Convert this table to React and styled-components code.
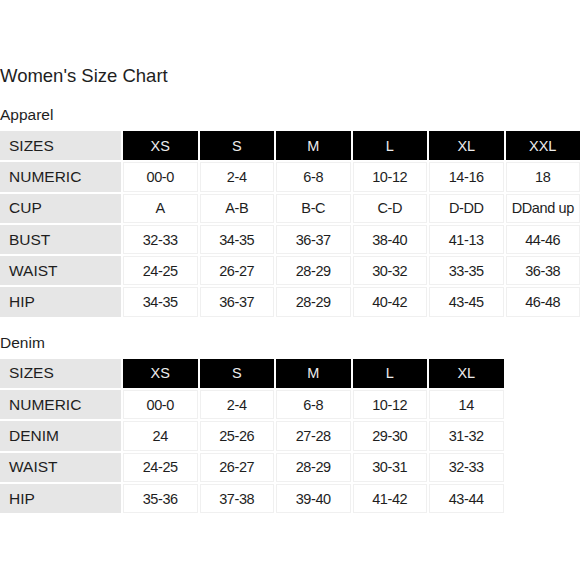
import styled, { createGlobalStyle } from "styled-components";

const GlobalStyle = createGlobalStyle`
  body {
    margin: 0;
    background: #ffffff;
    font-family: "Liberation Sans", Arial, sans-serif;
    color: #1e1e1e;
  }
`;

const apparel = {
  sizes: ["XS", "S", "M", "L", "XL", "XXL"],
  rows: [
    ["NUMERIC", "00-0", "2-4", "6-8", "10-12", "14-16", "18"],
    ["CUP", "A", "A-B", "B-C", "C-D", "D-DD", "DDand up"],
    ["BUST", "32-33", "34-35", "36-37", "38-40", "41-13", "44-46"],
    ["WAIST", "24-25", "26-27", "28-29", "30-32", "33-35", "36-38"],
    ["HIP", "34-35", "36-37", "28-29", "40-42", "43-45", "46-48"],
  ],
};

const denim = {
  sizes: ["XS", "S", "M", "L", "XL"],
  rows: [
    ["NUMERIC", "00-0", "2-4", "6-8", "10-12", "14"],
    ["DENIM", "24", "25-26", "27-28", "29-30", "31-32"],
    ["WAIST", "24-25", "26-27", "28-29", "30-31", "32-33"],
    ["HIP", "35-36", "37-38", "39-40", "41-42", "43-44"],
  ],
};

const Page = styled.div`
  padding-top: 65px;
  width: 580px;
`;

const Title = styled.h1`
  margin: 0 0 19px;
  font-size: 18.5px;
  line-height: 22px;
  font-weight: 400;
`;

const Section = styled.section`
  margin-bottom: 17px;
`;

const Heading = styled.h2`
  margin: 0 0 7px;
  font-size: 15.5px;
  line-height: 18px;
  font-weight: 400;
`;

const Grid = styled.div`
  display: grid;
  grid-template-columns: 121px repeat(${(p) => p.$cols}, 74.5px);
  grid-auto-rows: 29.3px;
  gap: 2px;
`;

const Label = styled.div`
  display: flex;
  align-items: center;
  padding-left: 9px;
  background: #e6e6e6;
  font-size: 15.5px;
`;

const Size = styled.div`
  display: flex;
  align-items: center;
  justify-content: center;
  background: #000000;
  color: #ececec;
  font-size: 14.5px;
`;

const Cell = styled.div`
  display: flex;
  align-items: center;
  justify-content: center;
  box-sizing: border-box;
  border: 1px solid #f0f0f0;
  font-size: 14.5px;
  letter-spacing: -0.4px;
  white-space: nowrap;
`;

const SizeTable = ({ name, data }) => (
  <Section>
    <Heading>{name}</Heading>
    <Grid $cols={data.sizes.length}>
      <Label>SIZES</Label>
      {data.sizes.map((s) => (
        <Size key={s}>{s}</Size>
      ))}
      {data.rows.map(([label, ...values]) => [
        <Label key={label}>{label}</Label>,
        ...values.map((v, i) => <Cell key={label + i}>{v}</Cell>),
      ])}
    </Grid>
  </Section>
);

export default function App() {
  return (
    <>
      <GlobalStyle />
      <Page>
        <Title>Women's Size Chart</Title>
        <SizeTable name="Apparel" data={apparel} />
        <SizeTable name="Denim" data={denim} />
      </Page>
    </>
  );
}
